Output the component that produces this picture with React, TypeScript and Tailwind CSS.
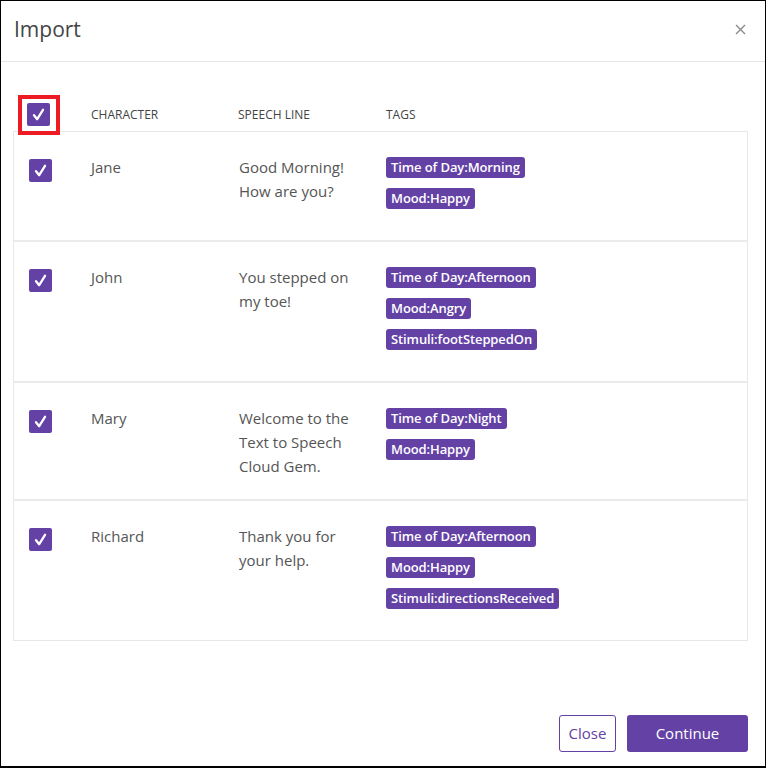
import React from "react";

function Check({ className = "" }: { className?: string }) {
  return (
    <div className={`w-[23px] h-[23px] rounded-[2px] bg-[#6441a5] flex items-center justify-center shrink-0 ${className}`}>
      <svg width="23" height="23" viewBox="0 0 23 23">
        <path d="M7 12.2 L10.2 16.2 L16 6.8" fill="none" stroke="white" strokeWidth="2.3" strokeLinecap="round" strokeLinejoin="round" />
      </svg>
    </div>
  );
}

function Tag({ text }: { text: string }) {
  return (
    <span className="inline-flex h-[21px] items-center rounded-[3px] bg-[#6441a5] px-[5px] text-[13px] font-semibold text-white tracking-[-0.1px] leading-none whitespace-nowrap">
      {text}
    </span>
  );
}

const rows = [
  { name: "Jane", speech: ["Good Morning!", "How are you?"], tags: ["Time of Day:Morning", "Mood:Happy"] },
  { name: "John", speech: ["You stepped on", "my toe!"], tags: ["Time of Day:Afternoon", "Mood:Angry", "Stimuli:footSteppedOn"] },
  { name: "Mary", speech: ["Welcome to the", "Text to Speech", "Cloud Gem."], tags: ["Time of Day:Night", "Mood:Happy"] },
  { name: "Richard", speech: ["Thank you for", "your help."], tags: ["Time of Day:Afternoon", "Mood:Happy", "Stimuli:directionsReceived"] },
];

export default function App() {
  return (
    <div
      className="w-[766px] h-[768px] bg-white border-l border-r border-t border-b-2 border-black flex flex-col"
      style={{ fontFamily: '"Open Sans", "Liberation Sans", sans-serif' }}
    >
      <div className="h-[61px] shrink-0 border-b border-[#e6e6e6] flex items-center justify-between pl-[13px] pr-[19px] pb-[3px]">
        <div className="text-[21px] text-[#444] font-normal">Import</div>
        <svg width="11" height="11" viewBox="0 0 11 11">
          <path d="M1 1 L10 10 M10 1 L1 10" stroke="#8a8a8a" strokeWidth="1.4" />
        </svg>
      </div>

      <div className="pl-[12px] pr-[17px] flex-1 flex flex-col">
        <div className="mt-[36px] h-[33px] grid grid-cols-[78px_147px_148px_1fr] items-center text-[12px] text-[#444] uppercase">
          <div className="pl-[14px]">
            <div className="relative w-[23px] h-[23px] z-10">
              <Check />
              <div className="absolute left-[-9px] top-[-8px] w-[42px] h-[40px] border-4 border-[#ed1c24]" />
            </div>
          </div>
          <div>Character</div>
          <div>Speech Line</div>
          <div>Tags</div>
        </div>

        <div className="border border-[#e8e8e8]">
          {rows.map((r, i) => (
            <div
              key={r.name}
              className={`grid grid-cols-[77px_148px_147px_1fr] items-start text-[15px] text-[#555] leading-[24px] ${i > 0 ? "border-t-2 border-[#ebebeb]" : ""}`}
            >
              <div className="pl-[15px] pt-[27px]">
                <Check />
              </div>
              <div className="pt-[23px]">{r.name}</div>
              <div className="pt-[23px] pb-[21px]">
                {r.speech.map((s) => (
                  <div key={s}>{s}</div>
                ))}
              </div>
              <div className="pt-[25px] pb-[31px] flex flex-col items-start gap-[10px]">
                {r.tags.map((t) => (
                  <Tag key={t} text={t} />
                ))}
              </div>
            </div>
          ))}
        </div>

        <div className="flex-1" />
        <div className="flex justify-end gap-[11px] pb-[14px]">
          <button className="w-[57px] h-[37px] rounded-[3px] border border-[#6441a5] text-[#6441a5] text-[15px] bg-white">
            Close
          </button>
          <button className="w-[121px] h-[37px] rounded-[3px] bg-[#6441a5] text-white text-[15px]">
            Continue
          </button>
        </div>
      </div>
    </div>
  );
}
